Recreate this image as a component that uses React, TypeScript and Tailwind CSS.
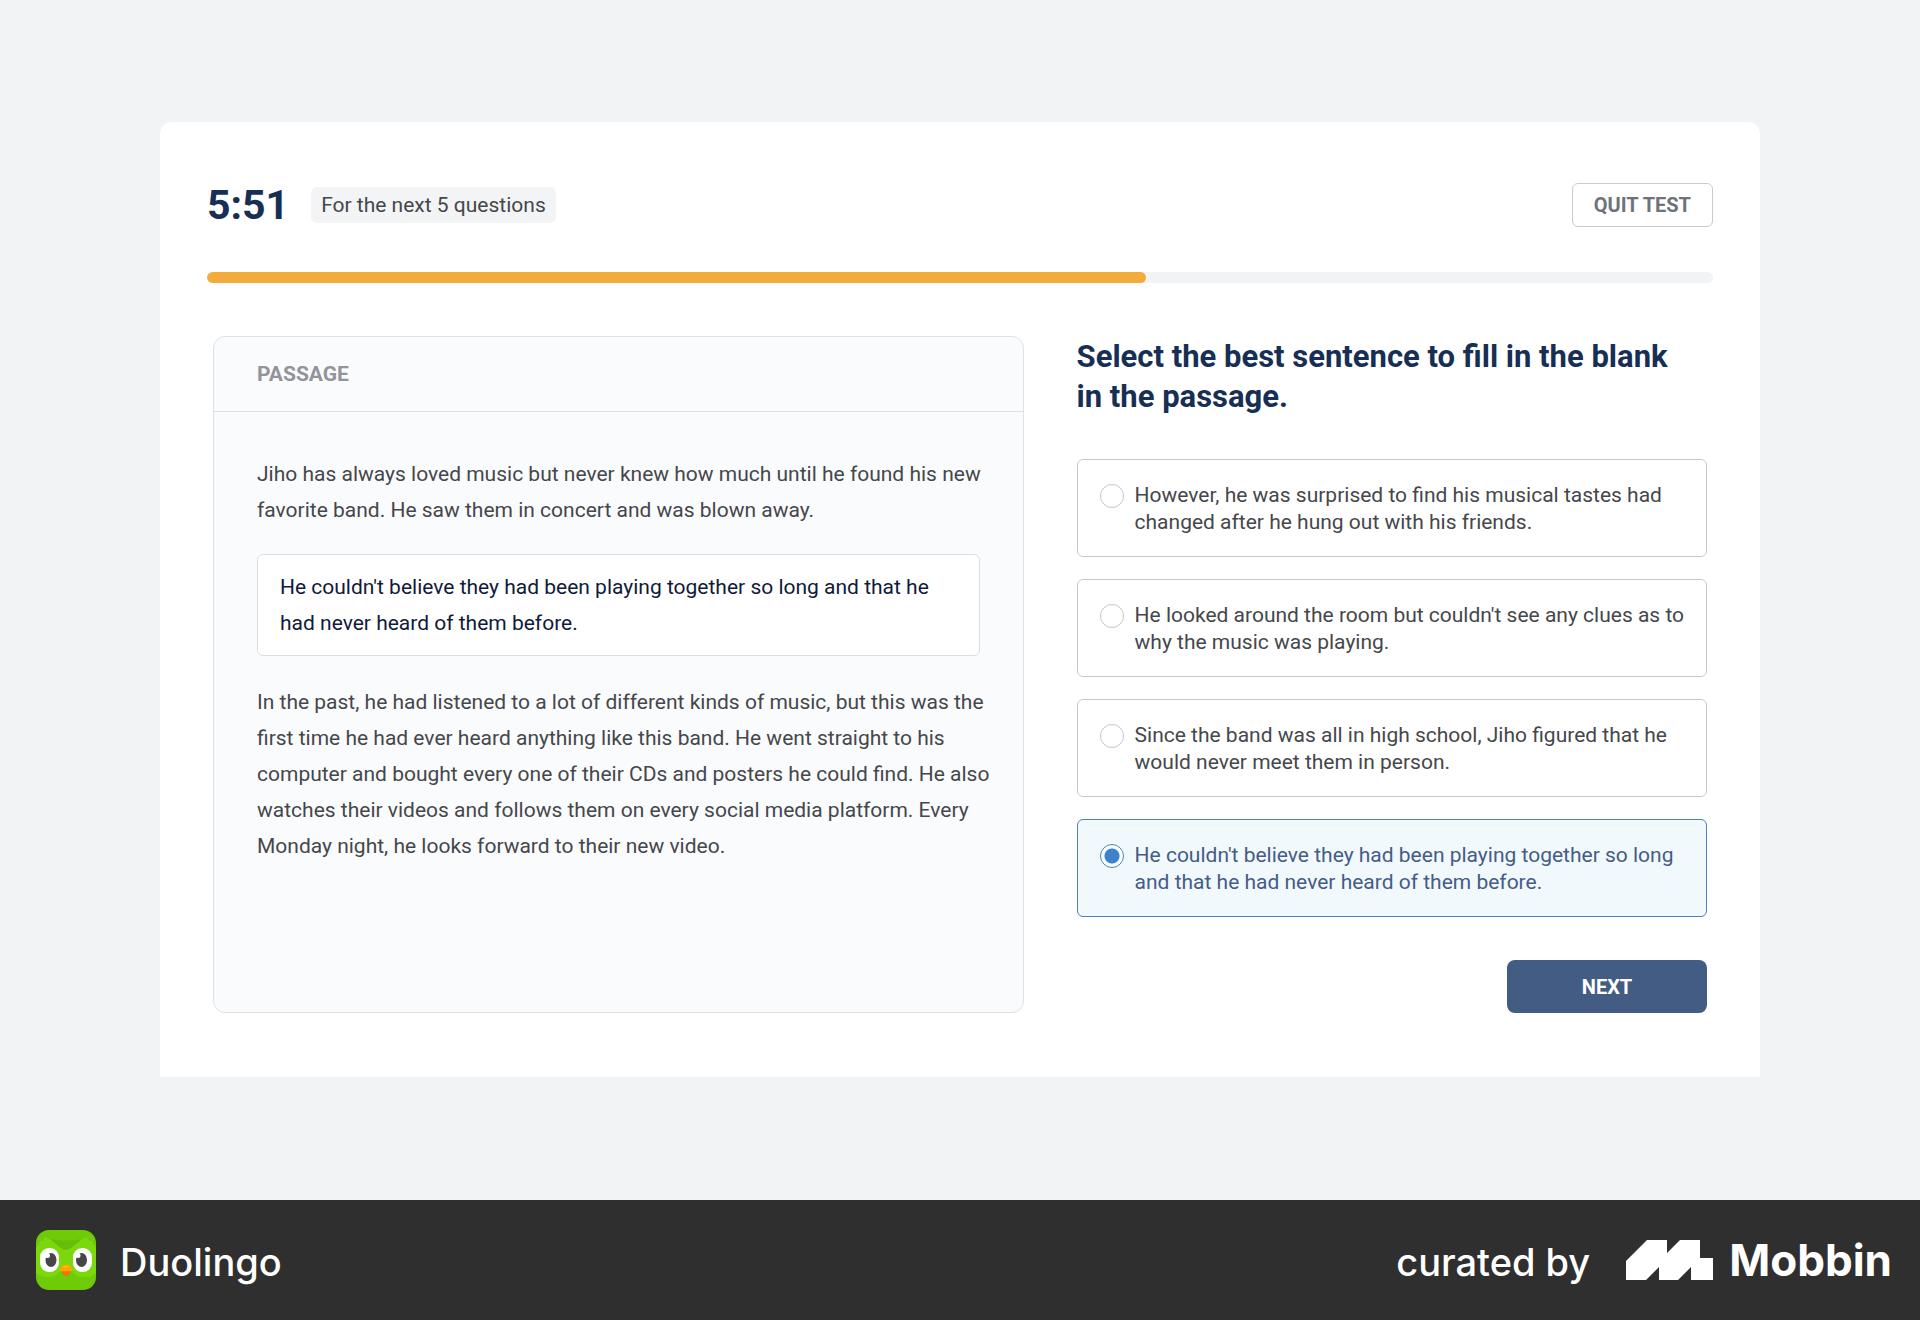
import { useState } from "react";

const OPTIONS = [
  "However, he was surprised to find his musical tastes had changed after he hung out with his friends.",
  "He looked around the room but couldn't see any clues as to why the music was playing.",
  "Since the band was all in high school, Jiho figured that he would never meet them in person.",
  "He couldn't believe they had been playing together so long and that he had never heard of them before.",
];

function OwlLogo() {
  return (
    <svg viewBox="0 0 60 60" className="size-[60px]" aria-hidden="true">
      <rect width="60" height="60" rx="13" fill="#6fca08" />
      <path
        d="M0 18 L3 14 L4 11 L7 11 L9 7 L14 9 L25 18 Q30 21 35 18 L46 9 L51 7 L53 11 L56 11 L57 14 L60 18 V43 Q54 48 46 47 Q39 46 36 41 H24 Q21 46 14 47 Q6 48 0 43 Z"
        fill="#7ad80c"
      />
      <path d="M14 9 L25 18 Q30 21 35 18 L46 9 Q30 12 14 9 Z" fill="#66be08" />
      <rect x="4" y="18" width="19" height="24" rx="9" fill="#fff" />
      <rect x="37" y="18" width="19" height="24" rx="9" fill="#fff" />
      <ellipse cx="15" cy="30" rx="5.5" ry="7" fill="#46464a" />
      <ellipse cx="45.5" cy="30" rx="5.5" ry="7" fill="#46464a" />
      <circle cx="11.5" cy="25.5" r="2.5" fill="#fff" />
      <circle cx="42" cy="25.5" r="2.5" fill="#fff" />
      <path d="M25.5 40 H34.5 Q34 46 30 46 Q26 46 25.5 40 Z" fill="#f77002" />
      <path d="M23.500 39 Q26 34.500 30 34.500 Q34 34.500 36.500 39 Q36 42 30 41 Q24 42 23.500 39 Z" fill="#ffa700" />
      <path d="M27 37 Q30 34.500 33 37 Q30 39 27 37 Z" fill="#ffc200" />
    </svg>
  );
}

function MobbinMark() {
  return (
    <svg viewBox="0 0 87 40" className="h-10 w-[87px]" aria-hidden="true">
      <path d="M0 21 L21 0 H41 V13 L54 0 H74 V18 H87 V40 H65 V27 L52 40 H33 V27 L20 40 H0 Z" fill="#fff" />
    </svg>
  );
}

export default function App() {
  const [selected, setSelected] = useState(3);

  return (
    <div className="flex min-h-screen flex-col bg-[#f2f3f5] font-['Roboto',sans-serif] text-[#45474b]">
      <main className="grow px-40 pt-[122px] pb-[123px]">
        <div className="rounded-t-xl bg-white px-[47px] pt-[61px] pb-16">
          <header className="flex items-center">
            <div className="text-[41px] leading-[44px] font-bold text-[#172f54]">5:51</div>
            <div className="ml-[22px] rounded-md bg-[#f2f4f5] px-[10px] text-[21px] leading-9">
              For the next 5 questions
            </div>
            <button
              type="button"
              className="ml-auto h-11 rounded-md border border-[#c9cbcd] px-[21px] text-[20px] font-bold text-[#6f7379]"
            >
              QUIT TEST
            </button>
          </header>

          <div
            role="progressbar"
            aria-label="Time remaining"
            aria-valuenow={62}
            className="mt-[45px] h-[11px] overflow-hidden rounded-full bg-[#f2f3f5]"
          >
            <div className="h-full rounded-full bg-[#f1ac3c]" style={{ width: "62.35%" }} />
          </div>

          <div className="mt-[53px] grid grid-cols-[9fr_7fr] gap-[53px] px-[6px]">
            <section className="rounded-xl border border-[#dfe1e4] bg-[#fafbfd]">
              <h2 className="border-b border-[#dfe1e4] px-[43px] text-[21px] leading-[74px] font-bold text-[#92949c]">
                PASSAGE
              </h2>
              <div className="px-[43px] pt-11 text-[21px] leading-9">
                <p className="-mr-3">
                  Jiho has always loved music but never knew how much until he found his new favorite band. He saw them
                  in concert and was blown away.
                </p>
                <div className="mt-[26px] mb-7 rounded-md border border-[#dcdee0] bg-white px-[22px] py-[14px] text-[#101a3a]">
                  He couldn't believe they had been playing together so long and that he had never heard of them before.
                </div>
                <p className="-mr-3">
                  In the past, he had listened to a lot of different kinds of music, but this was the first time he had
                  ever heard anything like this band. He went straight to his computer and bought every one of their
                  CDs and posters he could find. He also watches their videos and follows them on every social media
                  platform. Every Monday night, he looks forward to their new video.
                </p>
              </div>
            </section>

            <section>
              <h1 className="pt-px pr-6 text-[31px] leading-10 font-bold text-[#172f54]">
                Select the best sentence to fill in the blank in the passage.
              </h1>
              <div className="mt-[42px] flex flex-col gap-[22px]">
                {OPTIONS.map((text, i) => (
                  <label
                    key={text}
                    className={
                      i === selected
                        ? "flex cursor-pointer gap-[11px] rounded-md border border-[#4784c4] bg-[#f1f9fd] pt-[22px] pr-4 pb-5 pl-[22px] text-[21px] leading-[27px] text-[#455c86]"
                        : "flex cursor-pointer gap-[11px] rounded-md border border-[#c6c8ca] bg-white pt-[22px] pr-4 pb-5 pl-[22px] text-[21px] leading-[27px]"
                    }
                  >
                    <input
                      type="radio"
                      name="answer"
                      checked={i === selected}
                      onChange={() => setSelected(i)}
                      className="mt-[2px] size-6 shrink-0 appearance-none rounded-full border border-[#c4c6c8] bg-white p-1 checked:border-[#4784c4] checked:bg-[radial-gradient(circle,#3f82cc_7px,#ffffff_8px)]"
                    />
                    {text}
                  </label>
                ))}
              </div>
              <div className="mt-[43px] flex justify-end">
                <button type="button" className="h-[53px] w-[200px] rounded-lg bg-[#435c84] text-[20px] font-bold text-white">
                  NEXT
                </button>
              </div>
            </section>
          </div>
        </div>
      </main>

      <footer className="flex h-[120px] items-center bg-[#2f2f2f] pr-7 pl-9 font-['Inter',sans-serif] text-[38px] font-medium text-white">
        <OwlLogo />
        <span className="ml-6 pt-1">Duolingo</span>
        <span className="mr-9 ml-auto pt-1">curated by</span>
        <MobbinMark />
        <span className="ml-4 text-[44px] font-bold">Mobbin</span>
      </footer>
    </div>
  );
}
